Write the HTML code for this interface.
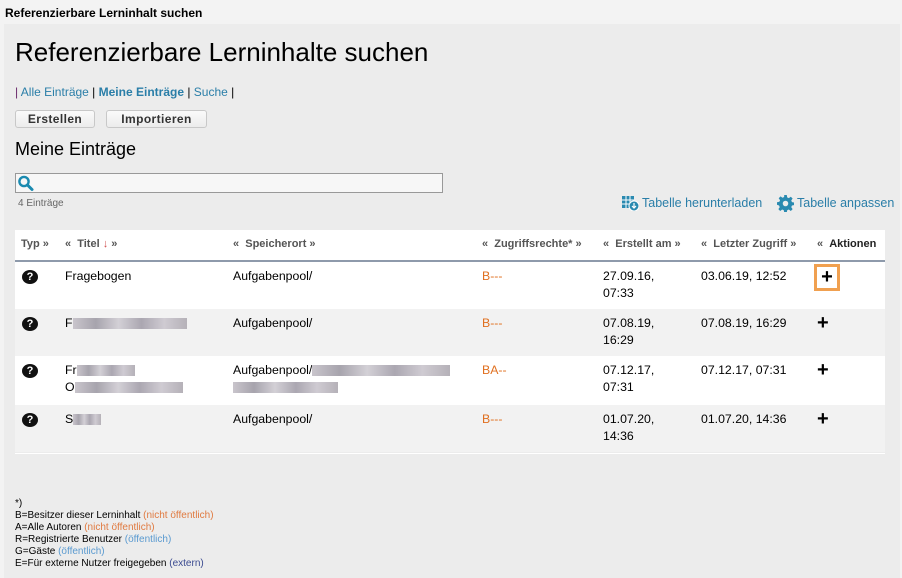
<!DOCTYPE html>
<html><head><meta charset="utf-8"><style>
*{margin:0;padding:0;box-sizing:border-box}
body{width:902px;height:578px;background:#f3f3f3;font-family:"Liberation Sans",Arial,sans-serif;font-size:12px;color:#000;position:relative;overflow:hidden}
.a{position:absolute;white-space:nowrap}
#main{position:absolute;left:4px;top:24px;width:896px;height:554px;background:#ececec}
.lnk{color:#2a7ea8}
.btn{position:absolute;top:110px;height:18px;border:1px solid #c8c8c8;border-radius:3px;background:linear-gradient(#fafafa,#ececec);font-weight:bold;font-size:12px;color:#333;text-align:center;line-height:16px;letter-spacing:0.4px}
table{position:absolute;left:15px;top:230px;width:870px;border-collapse:collapse;background:#fff}
th{height:31px;text-align:left;font-size:11px;font-weight:bold;color:#555;border-bottom:2px solid #8e9aab;vertical-align:middle;padding:0 0 2px 6px}
td{vertical-align:top;padding:6px 0 0 6px;font-size:12.3px;line-height:17px}
tr.g td{background:#f2f2f2}
.blur{display:inline-block;height:11px;vertical-align:middle;background:linear-gradient(90deg,#c9c5cc,#a7a4ad 20%,#d3d0d6 40%,#aba7b1 60%,#cfcbd2 80%,#b5b1b8)}
.or{color:#e07020}
.plus{font-size:20px;font-weight:bold;line-height:16px}
.q{display:inline-block;width:16px;height:14px;border-radius:50%;background:#111;color:#fff;font-size:11px;font-weight:bold;text-align:center;line-height:14px;margin-left:1px}
</style></head><body>
<div class="a" style="left:5px;top:6px;font-weight:bold;font-size:12px">Referenzierbare Lerninhalt suchen</div>
<div id="main"></div>
<div class="a" style="left:15px;top:37px;font-size:26px">Referenzierbare Lerninhalte suchen</div>
<div class="a" style="left:15px;top:85px"><span style="color:#6a2a6a">|</span> <span class="lnk">Alle Einträge</span> | <b class="lnk">Meine Einträge</b> | <span class="lnk">Suche</span> |</div>
<div class="btn" style="left:15px;width:80px">Erstellen</div>
<div class="btn" style="left:106px;width:101px">Importieren</div>
<div class="a" style="left:15px;top:139px;font-size:18px">Meine Einträge</div>
<div class="a" style="left:15px;top:173px;width:428px;height:20px;border:1px solid #999;background:#f7f7f7">
<svg width="18" height="18" style="position:absolute;left:1px;top:0" viewBox="0 0 18 18"><circle cx="7" cy="7.5" r="4.6" fill="none" stroke="#1a8ab0" stroke-width="2.4"/><path d="M10.5 11 L15 15.5" stroke="#1a8ab0" stroke-width="3" stroke-linecap="round"/></svg></div>
<div class="a" style="left:18px;top:198px;font-size:10px;color:#666">4 Einträge</div>
<svg class="a" style="left:622px;top:195px" width="17" height="16" viewBox="0 0 17 16"><rect x="0" y="1" width="12" height="12" fill="#2a8ab0"/><path d="M0 5h12M0 9h12M4 1v12M8 1v12" stroke="#fff" stroke-width="1"/><circle cx="12" cy="11" r="5" fill="#2a8ab0" stroke="#fff"/><path d="M12 8v5M10 11l2 2 2-2" stroke="#fff" stroke-width="1.2" fill="none"/></svg>
<div class="a lnk" style="left:642px;top:196px;font-size:12.5px">Tabelle herunterladen</div>
<svg class="a" style="left:777px;top:195px" width="17" height="17" viewBox="0 0 16 16"><path fill="#2a8ab0" d="M6.8 0h2.4l.4 2.2 1.5.7 1.9-1.3 1.7 1.7-1.3 1.9.7 1.5 2.2.4v2.4l-2.2.4-.7 1.5 1.3 1.9-1.7 1.7-1.9-1.3-1.5.7-.4 2.2H6.8l-.4-2.2-1.5-.7-1.9 1.3-1.7-1.7 1.3-1.9-.7-1.5L0 9.2V6.8l2.2-.4.7-1.5-1.3-1.9 1.7-1.7 1.9 1.3 1.5-.7z"/><circle cx="8" cy="8" r="2.6" fill="#ececec"/></svg>
<div class="a lnk" style="left:797px;top:196px;font-size:12.5px">Tabelle anpassen</div>
<table>
<tr><th style="width:44px">Typ »</th><th style="width:168px">« &nbsp;Titel <span style="color:#d05050">↓</span> »</th><th style="width:249px">« &nbsp;Speicherort »</th><th style="width:121px">« &nbsp;Zugriffsrechte* »</th><th style="width:98px">« &nbsp;Erstellt am »</th><th style="width:116px">« &nbsp;Letzter Zugriff »</th><th>« &nbsp;<span style="color:#222">Aktionen</span></th></tr>
<tr style="height:48px"><td><span class="q">?</span></td><td>Fragebogen</td><td>Aufgabenpool/</td><td class="or">B---</td><td>27.09.16,<br>07:33</td><td>03.06.19, 12:52</td><td style="padding:2px 0 0 3px"><div style="width:26px;height:27px;border:3px solid #f0a050;text-align:center;padding-top:2px" class="plus">+</div></td></tr>
<tr class="g" style="height:47px"><td><span class="q">?</span></td><td>F<span class="blur" style="width:114px"></span></td><td>Aufgabenpool/</td><td class="or">B---</td><td>07.08.19,<br>16:29</td><td>07.08.19, 16:29</td><td><span class="plus">+</span></td></tr>
<tr style="height:49px"><td><span class="q">?</span></td><td>Fr<span class="blur" style="width:58px"></span><br>O<span class="blur" style="width:108px"></span></td><td>Aufgabenpool/<span class="blur" style="width:138px"></span><br><span class="blur" style="width:105px"></span></td><td class="or">BA--</td><td>07.12.17,<br>07:31</td><td>07.12.17, 07:31</td><td><span class="plus">+</span></td></tr>
<tr class="g" style="height:47px"><td><span class="q">?</span></td><td>S<span class="blur" style="width:28px"></span></td><td>Aufgabenpool/</td><td class="or">B---</td><td>01.07.20,<br>14:36</td><td>01.07.20, 14:36</td><td><span class="plus">+</span></td></tr>
</table>
<div class="a" style="left:15px;top:453px;width:870px;height:1px;background:#fff"></div>
<div class="a" style="left:15px;top:498px;font-size:10px;line-height:12px">*)<br>B=Besitzer dieser Lerninhalt <span style="color:#e07a40">(nicht öffentlich)</span><br>A=Alle Autoren <span style="color:#e07a40">(nicht öffentlich)</span><br>R=Registrierte Benutzer <span style="color:#5a9ad0">(öffentlich)</span><br>G=Gäste <span style="color:#5a9ad0">(öffentlich)</span><br>E=Für externe Nutzer freigegeben <span style="color:#3a4a90">(extern)</span></div>
</body></html>
